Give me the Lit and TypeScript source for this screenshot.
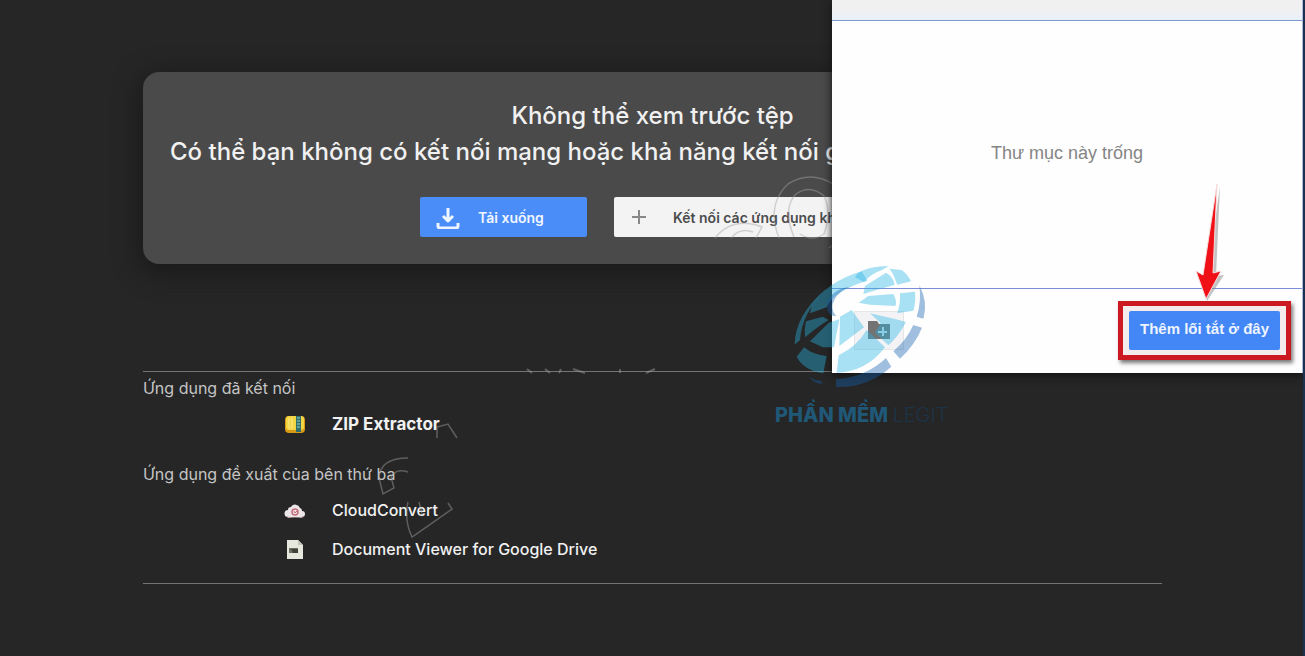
import { LitElement, html, css, svg } from "lit";
import { customElement } from "lit/decorators.js";

const zipIcon = html`<svg class="app-icon" viewBox="0 0 22 22" aria-hidden="true">
  <rect x="1" y="3" width="20" height="17" rx="4" fill="#d99a16" />
  <rect x="2" y="3" width="18" height="14" rx="3" fill="#f3d544" />
  <path d="M5 5v11M8 5v11" stroke="#f9e98c" stroke-width="1" />
  <rect x="12" y="3" width="5" height="16" fill="#2f6e6c" />
  <path d="M13 5h3M13 8h3M13 11h3M13 14h3" stroke="#9fd0c4" stroke-width="1" />
</svg>`;

const cloudIcon = html`<svg class="app-icon" viewBox="0 0 22 22" aria-hidden="true">
  <path d="M4 18a3.500 3.500 0 0 1 0-7 3 3 0 0 1 3-3 5 5 0 0 1 9 1 3 3 0 0 1 2 3 3 3 0 0 1 0 6z" fill="#ece6e8" />
  <path d="M2 17q9 3 18 0l-2 2H4z" fill="#b9a3a8" />
  <circle cx="11" cy="13" r="3" fill="none" stroke="#c8697a" stroke-width="1.500" />
  <path d="M10 12l1 2 2-2" fill="none" stroke="#c8697a" />
</svg>`;

const docIcon = html`<svg class="app-icon" viewBox="0 0 22 22" aria-hidden="true">
  <path d="M3 2h11l5 5v14H3z" fill="#e6e8de" />
  <path d="M14 2v5h5" fill="#c3c6ba" />
  <rect x="5" y="10" width="9" height="5" fill="#6d7062" />
  <path d="M7 11h7v4h-5z" fill="#3f4239" />
</svg>`;

const lightPanes = [
  "M305 64Q200 95 155 168L150 190 200 172Q215 125 322 92Z",
  "M200 115Q105 195 104 284L120 270Q125 190 200 115Z",
  "M138 214L188 200 206 210Q165 235 136 262Q132 240 138 214Z",
  "M150 274L206 218 238 208 222 292 188 292Z",
  "M110 320L132 292Q160 315 200 318L190 370Q130 360 110 320Z",
  "M285 82Q300 50 386 48L366 60Q335 70 312 96Z",
  "M388 56L425 60Q445 75 453 94L412 104 398 70Z",
  "M315 108L378 68Q400 80 404 104L350 120 310 132Z",
  "M296 158L325 138 400 132Q412 155 406 168L330 164Z",
  "M420 130L465 125Q468 155 460 182L412 190Q422 160 420 130Z",
  "M330 190L402 206 438 216Q415 260 385 286L345 248 362 220Z",
  "M240 200L275 180 312 232 238 288Z",
  "M320 240L340 258 375 292Q320 365 230 368L236 316Q290 290 320 240Z",
];

const deepPanes = [
  "M478 106Q505 155 490 206L470 200Q485 155 478 106Z",
  "M460 225L486 233Q465 285 420 326L400 304Q440 270 460 225Z",
  "M378 324L394 350Q320 415 228 411L228 388Q320 380 378 324Z",
  "M146 380Q165 392 184 393L186 403Q160 398 146 380Z",
  "M270 110Q205 120 201 172Q203 200 228 198Q208 175 224 148Q235 125 270 110Z",
];

@customElement("app-root")
export class AppRoot extends LitElement {
  static styles = css`
    * { box-sizing: border-box; }
    :host {
      display: block;
      position: relative;
      min-height: 100vh;
      overflow: hidden;
      background: #262626;
      color: #f1f1f1;
      font-family: "Inter", "Noto Sans", sans-serif;
    }
    button { font: inherit; border: 0; margin: 0; cursor: pointer; }
    .page { padding: 72px 143px; }
    .card {
      padding: 26px 27px 27px;
      border-radius: 16px;
      background: #4a4a4a;
      box-shadow: 0 6px 24px 4px #1a1a1a;
    }
    .message {
      margin: 0;
      font-size: 24px;
      font-weight: 500;
      line-height: 36px;
      white-space: nowrap;
    }
    .title { text-align: center; }
    .actions { display: flex; justify-content: center; gap: 27px; margin-top: 27px; }
    .action {
      display: flex;
      align-items: center;
      height: 40px;
      border-radius: 2px;
      font-size: 14px;
      font-weight: 600;
      white-space: nowrap;
    }
    .download { gap: 18px; width: 167px; padding: 0 16px; background: #4b8df8; color: #f1f6ff; }
    .connect { gap: 25px; width: 271px; padding: 0 16px; background: #f3f3f4; color: #4c4c4c; }
    .action svg { flex: none; }
    .apps {
      margin-top: 107px;
      padding: 0 0 15px;
      border-top: 1px solid #747474;
      border-bottom: 1px solid #747474;
    }
    .group {
      margin: 0;
      padding-top: 3px;
      font-size: 16px;
      font-weight: 400;
      line-height: 26px;
      color: #c4c4c4;
    }
    .list { margin: 0 0 15px; padding: 3px 0 0 141px; list-style: none; }
    .list:last-child { margin: 0; }
    .app {
      display: flex;
      align-items: center;
      gap: 26px;
      height: 39px;
      color: #f1f1f1;
      font-size: 16px;
      font-weight: 500;
      text-decoration: none;
    }
    .strong { font-size: 17px; font-weight: 700; }
    .app-icon { width: 22px; height: 22px; }
    .picker {
      position: absolute;
      top: 0;
      right: 2px;
      width: 471px;
      background: #fefefe;
      border-right: 1px solid #aebbe0;
      box-shadow: 0 2px 8px #111;
    }
    .picker-head { height: 20px; background: linear-gradient(#f0f0f0 50%, #eaf0fb); }
    .picker-body {
      display: flex;
      align-items: center;
      justify-content: center;
      height: 269px;
      padding-bottom: 3px;
      border-top: 1px solid #7b9ccb;
      border-bottom: 1px solid #7c8fd6;
      color: #858585;
      font: 18px "Liberation Sans", Arial, sans-serif;
    }
    .picker-body p { margin: 0; }
    .picker-foot {
      display: flex;
      align-items: center;
      justify-content: space-between;
      height: 84px;
      padding: 0 11px 2px 22px;
    }
    .new-folder {
      display: grid;
      place-items: center;
      width: 50px;
      height: 39px;
      padding: 0;
      border: 1px solid #e6e6e6;
      background: #f3f3f5;
    }
    .highlight {
      padding: 5px 6px;
      border: 5px solid #cc1820;
      background: #f4ecec;
      box-shadow: 2px 3px 4px #777;
    }
    .add {
      height: 39px;
      width: 151px;
      padding: 0 0 3px;
      border-radius: 2px;
      background: #4386f5;
      color: #eef4ff;
      font: bold 15px "Liberation Sans", Arial, sans-serif;
      white-space: nowrap;
    }
    .arrow { position: absolute; right: 76px; top: 180px; }
    .edge { position: absolute; top: 0; right: 0; width: 2px; height: 100%; background: #1c3150; }
    .scribbles { position: absolute; top: 0; left: 0; pointer-events: none; }
    .mark {
      position: absolute;
      top: 262px;
      right: 357px;
      width: 173px;
      pointer-events: none;
    }
    .globe { display: block; margin-left: 15px; }
    .brand {
      margin: 9px 0 0;
      font: 800 20px/28px "Inter", sans-serif;
      color: #205878;
      white-space: nowrap;
    }
    .brand span { font-weight: 300; color: #1d3448; }
  `;

  private appLink(icon: unknown, name: string, strong = false) {
    return html`<li><a class="app ${strong ? "strong" : ""}" href="#">${icon}<span>${name}</span></a></li>`;
  }

  render() {
    return html`
      <main class="page">
        <section class="card">
          <h1 class="message title">Không thể xem trước tệp</h1>
          <p class="message">Có thể bạn không có kết nối mạng hoặc khả năng kết nối g</p>
          <div class="actions">
            <button class="action download">
              <svg width="24" height="24" viewBox="0 0 24 24" fill="none" stroke="#eef5ff" stroke-width="3" stroke-linejoin="round" aria-hidden="true">
                <path d="M12 3v12M7 11l5 5 5-5M2 18v3q0 2 2 2h16q2 0 2-2v-3" />
              </svg>
              <span>Tải xuống</span>
            </button>
            <button class="action connect">
              <svg width="18" height="18" viewBox="0 0 18 18" stroke="#888" stroke-width="2" aria-hidden="true">
                <path d="M9 2v14M2 9h14" />
              </svg>
              <span>Kết nối các ứng dụng khác</span>
            </button>
          </div>
        </section>
        <section class="apps">
          <h2 class="group">Ứng dụng đã kết nối</h2>
          <ul class="list">${this.appLink(zipIcon, "ZIP Extractor", true)}</ul>
          <h2 class="group">Ứng dụng đề xuất của bên thứ ba</h2>
          <ul class="list">
            ${this.appLink(cloudIcon, "CloudConvert")}
            ${this.appLink(docIcon, "Document Viewer for Google Drive")}
          </ul>
        </section>
      </main>

      <svg class="scribbles" width="833" height="560" fill="none" stroke="#a4a4a4" stroke-opacity="0.450" stroke-width="1.500" aria-hidden="true">
        <path d="M779 238Q766 205 788 184Q810 170 833 184M794 237Q782 208 796 194Q810 184 824 196Q832 212 824 234Q812 242 800 234" />
        <path d="M715 238Q733 216 762 227L756 238M731 238Q740 227 753 232M829 248l4-3" />
        <path d="M437 438V427L448 424L457 438M408 458Q380 458 379 478L383 494L394 488L391 477Q396 468 408 472" />
        <path d="M408 502Q404 520 412 537L452 509L448 503M419 502L422 514" />
        <path d="M527 369l5 4M545 369l5 4M561 369l-2 4M573 369l12 4M620 369v4M655 369l-9 4" stroke-width="2" />
      </svg>

      <section class="picker">
        <div class="picker-head"></div>
        <div class="picker-body"><p>Thư mục này trống</p></div>
        <div class="picker-foot">
          <button class="new-folder" aria-label="+">
            <svg width="22" height="20" viewBox="0 0 22 20" aria-hidden="true">
              <path d="M0 1h9l2 3h11v15H0z" fill="#737373" />
              <path d="M15 7v9M10 12h9" stroke="#c8e0e8" stroke-width="2" />
            </svg>
          </button>
          <div class="highlight"><button class="add">Thêm lối tắt ở đây</button></div>
        </div>
      </section>
      <div class="edge"></div>

      <svg class="arrow" width="40" height="122" viewBox="0 0 40 122" aria-hidden="true">
        <path d="M31 6L27 96L35 95L18 121L12 95L18 98Z" fill="#888" opacity="0.500" />
        <path d="M28 4L24 93L32 91L17 119L7 91L14 95Z" fill="#f01018" stroke="#f7dcdc" stroke-width="1" />
      </svg>

      <div class="mark">
        <svg class="globe" width="140" height="130" viewBox="90 36 420 390" aria-hidden="true">
          ${lightPanes.map((d) => svg`<path d=${d} fill="#28b4e6" fill-opacity="0.400" />`)}
          ${deepPanes.map((d) => svg`<path d=${d} fill="#1461b1" fill-opacity="0.400" />`)}
        </svg>
        <p class="brand">PHẦN MỀM <span>LEGIT</span></p>
      </div>
    `;
  }
}
